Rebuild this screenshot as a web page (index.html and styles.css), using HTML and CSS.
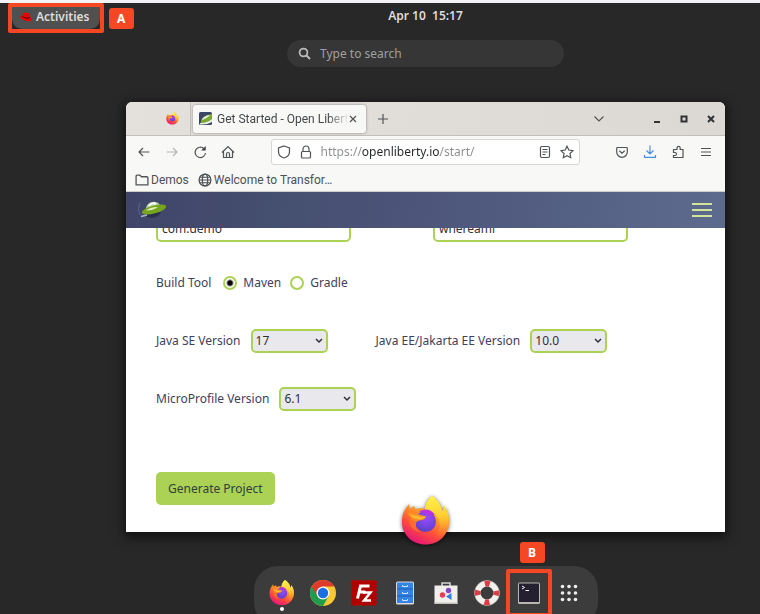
FILE: index.html
```html
<!DOCTYPE html>
<html lang="en">
<head>
<meta charset="utf-8">
<title>Activities overview</title>
<link rel="stylesheet" href="styles.css">
</head>
<body>
<svg class="defs" aria-hidden="true">
  <defs>
    <linearGradient id="ff-body" x1="0.75" y1="0.1" x2="0.3" y2="1">
      <stop offset="0" stop-color="#ffd83a"/><stop offset="0.35" stop-color="#ff9a26"/>
      <stop offset="0.65" stop-color="#ff4f3a"/><stop offset="1" stop-color="#e3127c"/>
    </linearGradient>
    <linearGradient id="ff-flame" x1="0.4" y1="0" x2="0.5" y2="1">
      <stop offset="0" stop-color="#fff04a"/><stop offset="0.5" stop-color="#ffd030"/><stop offset="1" stop-color="#ff8a30" stop-opacity="0"/>
    </linearGradient>
    <radialGradient id="ff-globe" cx="0.55" cy="0.3" r="0.8">
      <stop offset="0" stop-color="#9a4dff"/><stop offset="0.6" stop-color="#7044dc"/><stop offset="1" stop-color="#5040b8"/>
    </radialGradient>
    <symbol id="firefox" viewBox="0 0 50 50">
      <path fill="url(#ff-body)" d="M31 0C37 4 40 9 41 14L42 15 43 10C47 15 48.500 21 48 27 47 40 37 48.500 24.500 48.500 11 48.500 1 38.500 1 26 1 18 4 13 8 8L9 13 13 10 15 13.500C18 11.500 21 11.500 24 13 24 8 27 3 31 0Z"/>
      <path fill="url(#ff-flame)" d="M31 0C37 4 40 9 41 14L42 15 43 10C48 17 49 25 46 32 43 39 38 42 32 42 38 38 40 32 38 25 36 18 31 15 24 14 24 8 27 3 31 0Z"/>
      <circle cx="24.500" cy="25.500" r="10.500" fill="url(#ff-globe)"/>
      <path fill="#b833e1" d="M18 16C23 12 30 13 34 19L29 18C31 20 33 22 33.500 24 28 18 24 17 18 16Z"/>
      <path fill="#ff8a22" d="M6 17C10 14 15 16 18 18.500L25 20.500C24 23.500 21 24.500 18 24.500 15 25.500 14 27 15 31 11 30 9 26 10 22Z"/>
      <path fill="#ffb52c" d="M8 18C12 19 19 21 25 20.500 23 23 20 23.500 17 23.500 13 23 10 21 8 18Z"/>
      <path fill="#ff6b2d" d="M8 22C10 24 12 25 15.500 25.500 13 29 15 34 20 36 13 36 7 29 8 22Z"/>
    </symbol>
  </defs>
</svg>

<div class="desktop">
  <header class="panel">
    <div class="callout callout-activities">
      <button class="activities" type="button">
        <svg class="hat" viewBox="0 0 12 10" aria-hidden="true"><path fill="#e00" d="M3.500.8C4.500.3 5.500 1 6.500 1S8.500.5 9 1.500L9.800 5C11.200 5.500 12 6.500 11.800 7.500 11.500 9.500 8.500 9.500 6 8.800 3 8 .2 6.500.2 4.800.2 3.800 1.500 3.500 2.700 3.800Z"/><path fill="#300" d="M2.700 3.800C4 5.500 8 6.500 9.800 5L9.900 6C8 7.600 4 6.700 2.400 4.600Z"/></svg>
        Activities
      </button>
    </div>
    <span class="marker marker-a">A</span>
  </header>

  <main class="stage">
    <time class="clock">Apr 10 &nbsp;15:17</time>
    <label class="search">
      <svg viewBox="0 0 14 14" aria-hidden="true"><circle cx="5.500" cy="5.500" r="3.900" fill="none" stroke="#bbb" stroke-width="1.800"/><path d="M8.500 8.500 12 12" stroke="#bbb" stroke-width="2"/></svg>
      <input type="text" placeholder="Type to search" aria-label="Type to search">
    </label>

    <section class="window" aria-label="Firefox">
      <div class="tabbar">
        <button class="pinned" type="button" aria-label="Firefox View"><svg><use href="#firefox"/></svg></button>
        <div class="tab">
          <svg class="favicon" viewBox="0 0 13 13" aria-hidden="true"><rect width="13" height="13" rx="1.500" fill="#3c4668"/><path d="M2 8Q6 3 13 2V7Q8 11 2 11Z" fill="#7ba832"/><path d="M3 7Q6 3 11 3 9 6 3 8Z" fill="#dfe8cb"/><path d="M1 11Q8 11 13 7V10Q8 13 1 12.500Z" fill="#e9f0dc"/></svg>
          <span class="tab-title">Get Started - Open Liberty</span>
          <button class="plain" type="button" aria-label="Close tab"><svg class="s8" viewBox="0 0 8 8"><path d="M1 1 7 7M7 1 1 7"/></svg></button>
        </div>
        <button class="plain newtab" type="button" aria-label="New tab"><svg class="s10" viewBox="0 0 10 10"><path d="M5 0V10M0 5H10"/></svg></button>
        <div class="window-controls">
          <button class="plain list-tabs" type="button" aria-label="List all tabs"><svg class="s10" viewBox="0 0 10 10"><path d="M.5 2.500 5 7 9.500 2.500"/></svg></button>
          <button class="plain" type="button" aria-label="Minimize"><svg class="s8 heavy" viewBox="0 0 8 8"><path d="M1 7H7"/></svg></button>
          <button class="plain" type="button" aria-label="Maximize"><svg class="s8 heavy" viewBox="0 0 8 8"><path d="M1.500 1.500H6.500V6.500H1.500Z"/></svg></button>
          <button class="plain" type="button" aria-label="Close"><svg class="s8 heavy" viewBox="0 0 8 8"><path d="M1 1 7 7M7 1 1 7"/></svg></button>
        </div>
      </div>

      <div class="toolbar">
        <div class="tools">
          <button class="plain" type="button" aria-label="Back"><svg viewBox="0 0 14 14"><path d="M12.500 7H2M6 3 2 7 6 11"/></svg></button>
          <button class="plain" type="button" aria-label="Forward" disabled><svg viewBox="0 0 14 14"><path d="M1.500 7H12M8 3 12 7 8 11"/></svg></button>
          <button class="plain" type="button" aria-label="Reload"><svg viewBox="0 0 14 14"><path d="M11 3.700A5.200 5.200 0 1 0 12.500 8"/><path d="M12.700 1V5.500H8.200Z" fill="#3c3f40" stroke="none"/></svg></button>
          <button class="plain" type="button" aria-label="Home"><svg viewBox="0 0 14 14"><path d="M1 7.500 7 1.500 13 7.500M2.500 6.500V12.500H11.500V6.500M5.500 12.500V9A1.500 1.500 0 0 1 8.500 9V12.500"/></svg></button>
        </div>
        <div class="urlbar">
          <svg viewBox="0 0 14 14" aria-hidden="true"><path d="M7 1 12.500 3V6.500C12.500 10 10 12.300 7 13 4 12.300 1.500 10 1.500 6.500V3Z"/></svg>
          <svg viewBox="0 0 14 14" aria-hidden="true"><rect x="2.500" y="6.500" width="9" height="6.500" rx="1"/><path d="M4 6.500V4A3 3 0 0 1 10 4V6.500"/></svg>
          <input type="text" value="https://openliberty.io/start/" aria-label="Address">
          <button class="plain" type="button" aria-label="Reader view"><svg viewBox="0 0 14 14"><rect x="2.500" y="1.500" width="9" height="11" rx="1.500"/><path d="M4.500 4.500H9.500M4.500 7H9.500M4.500 9.500H7.500"/></svg></button>
          <button class="plain" type="button" aria-label="Bookmark this page"><svg viewBox="0 0 14 14"><path d="M7 1.200 8.800 5 13 5.600 10 8.500 10.700 12.700 7 10.700 3.300 12.700 4 8.500 1 5.600 5.200 5Z"/></svg></button>
        </div>
        <div class="tools">
          <button class="plain" type="button" aria-label="Pocket"><svg viewBox="0 0 14 14"><path d="M2.500 2.500H11.500A.8.8 0 0 1 12.300 3.300V7A5.300 5.300 0 0 1 1.700 7V3.300A.8.8 0 0 1 2.500 2.500ZM4.300 5.700 7 8.200 9.700 5.700"/></svg></button>
          <button class="plain download" type="button" aria-label="Downloads"><svg viewBox="0 0 14 14"><path d="M7 .5V8.500M3.500 5.500 7 9 10.500 5.500M1.500 10V12.300H12.500V10"/></svg></button>
          <button class="plain" type="button" aria-label="Extensions"><svg viewBox="0 0 14 14"><path d="M2.500 4.500H6V3A1.600 1.600 0 0 1 9.200 3V4.500H12V12.500H2.500V10.500H4A1.500 1.500 0 0 0 4 7.500H2.500Z"/></svg></button>
          <button class="plain" type="button" aria-label="Application menu"><svg viewBox="0 0 14 14"><path d="M2 3.500H12M2 7H12M2 10.500H12"/></svg></button>
        </div>
      </div>

      <nav class="bookmarks">
        <a href="#"><svg viewBox="0 0 13 13" aria-hidden="true"><path d="M1 11V3A1 1 0 0 1 2 2H4.500L6 3.500H11A1 1 0 0 1 12 4.500V11Z"/></svg>Demos</a>
        <a href="#"><svg viewBox="0 0 13 13" aria-hidden="true"><circle cx="6.500" cy="6.500" r="5.500"/><ellipse cx="6.500" cy="6.500" rx="2.500" ry="5.500"/><path d="M1 6.500H12M2 4H11M2 9H11" stroke-width="1"/></svg>Welcome to Transfor…</a>
      </nav>

      <div class="site-header">
        <svg class="ufo" viewBox="0 0 30 20" aria-label="Open Liberty">
          <path d="M3 3Q0 9 3 15" fill="none" stroke="#56698e"/>
          <ellipse cx="16" cy="13" rx="8" ry="4.500" fill="#2a304c" transform="rotate(-12 16 13)"/>
          <path d="M9 9C9 2 19 -1 23 5L22 9 10 12Z" fill="#b7d3a2"/>
          <path d="M12 6Q15 2 19 4" stroke="#fff" stroke-width="2" fill="none"/>
          <ellipse cx="17" cy="9.500" rx="12.500" ry="4" transform="rotate(-15 17 9.500)" fill="#75a51f"/>
          <path d="M9 10.500Q16 10.500 21 7 14 6.500 9 10.500Z" fill="#e3eebb"/>
          <path d="M4 16.500 10 15" stroke="#aab4ca" stroke-width="1.500"/>
        </svg>
        <button class="plain" type="button" aria-label="Menu"><svg class="burger" viewBox="0 0 20 16"><path d="M0 2H20M0 8H20M0 14H20"/></svg></button>
      </div>

      <form class="page">
        <div class="row row-names">
          <input type="text" value="com.demo" aria-label="Group">
          <input type="text" value="whereami" aria-label="Artifact">
        </div>
        <div class="row row-build">
          <span class="build-label">Build Tool</span>
          <label class="radio"><input type="radio" name="build" checked>Maven</label>
          <label class="radio"><input type="radio" name="build">Gradle</label>
        </div>
        <div class="row row-java">
          <div class="field"><label for="se">Java SE Version</label>
            <span class="select"><select id="se"><option>17</option></select><svg viewBox="0 0 8 6" aria-hidden="true"><path d="M1 1 4 4 7 1"/></svg></span></div>
          <div class="field"><label for="ee">Java EE/Jakarta EE Version</label>
            <span class="select"><select id="ee"><option>10.0</option></select><svg viewBox="0 0 8 6" aria-hidden="true"><path d="M1 1 4 4 7 1"/></svg></span></div>
        </div>
        <div class="row row-mp">
          <div class="field"><label for="mp">MicroProfile Version</label>
            <span class="select"><select id="mp"><option>6.1</option></select><svg viewBox="0 0 8 6" aria-hidden="true"><path d="M1 1 4 4 7 1"/></svg></span></div>
        </div>
        <button class="generate" type="button">Generate Project</button>
      </form>
      <svg class="window-icon" aria-hidden="true"><use href="#firefox"/></svg>
    </section>

    <nav class="dock" aria-label="Dash">
      <button type="button" class="running" aria-label="Firefox"><svg><use href="#firefox"/></svg></button>
      <button type="button" aria-label="Chrome"><svg viewBox="0 0 26 26"><circle cx="13" cy="13" r="13" fill="#fcc934"/><path d="M13 13 1.740 6.500A13 13 0 0 0 13 26L18.600 16.300Z" fill="#1f9d4d"/><path d="M13 6.500H24.260A13 13 0 0 0 1.740 6.500L7.400 16.200 13 13Z" fill="#de3b2f"/><circle cx="13" cy="13" r="6.500" fill="#fff"/><circle cx="13" cy="13" r="5.200" fill="#1b6fe4"/></svg></button>
      <button type="button" aria-label="FileZilla"><svg viewBox="0 0 26 26"><rect x="1" y="1" width="24" height="24" fill="#b00000" stroke="#b00000" stroke-width="2" stroke-dasharray="2.500 1.500"/><path d="M6.500 18.500 9.500 6H18.500M8 12H14.500" fill="none" stroke="#fff" stroke-width="3"/><path d="M12 12.500H19.500L13 20.500H20" fill="none" stroke="#fff" stroke-width="2.500"/></svg></button>
      <button type="button" aria-label="Files"><svg viewBox="0 0 26 26"><rect x="4" y="1.500" width="18" height="23" rx="1.500" fill="#dcdad6"/><rect x="5" y="2.500" width="16" height="20.500" fill="#3584e4"/><path d="M5 9H21M5 16H21" stroke="#1c5fb5"/><path d="M10.500 5V6.500H15.500V5M10.500 12V13.500H15.500V12M10.500 19V20.500H15.500V19" fill="none" stroke="#d5e5f8"/></svg></button>
      <button type="button" aria-label="Software"><svg viewBox="0 0 26 26"><path d="M9 6V3H17V6" fill="none" stroke="#d8d5cf" stroke-width="1.500"/><path d="M1.500 5.500H24.500V24H1.500Z" fill="#f1efeb"/><path d="M1.500 22.500H24.500V24H1.500Z" fill="#c5c2bc"/><circle cx="15.500" cy="10.500" r="2.700" fill="#8544c8"/><circle cx="9.500" cy="15" r="2.700" fill="#ec3b58"/><path d="M18.500 13V20L13 16.500Z" fill="#2d7ee8"/></svg></button>
      <button type="button" aria-label="Help"><svg viewBox="0 0 26 26"><circle cx="13" cy="13" r="9.500" fill="none" stroke="#f3f1ee" stroke-width="6"/><circle cx="13" cy="13" r="9.500" fill="none" stroke="#df3b43" stroke-width="6" stroke-dasharray="5 9.923" stroke-dashoffset="2.500"/><circle cx="13" cy="13" r="12.500" fill="none" stroke="#aaa49c" stroke-width=".6"/></svg></button>
      <div class="callout callout-terminal">
        <span class="marker marker-b">B</span>
        <button type="button" aria-label="Terminal"><svg viewBox="0 0 26 26"><rect x="2" y="2.500" width="22" height="21.500" rx="1.500" fill="#b9b6b1"/><rect x="3" y="3.500" width="20" height="18.500" fill="#241f31"/><path d="M6 6 8.500 7.500 6 9M9.500 10.500H13" fill="none" stroke="#fff"/></svg></button>
      </div>
      <button type="button" aria-label="Show applications"><svg viewBox="0 0 26 26" fill="#eee"><circle cx="6.500" cy="6.500" r="1.800"/><circle cx="13" cy="6.500" r="1.800"/><circle cx="19.500" cy="6.500" r="1.800"/><circle cx="6.500" cy="13" r="1.800"/><circle cx="13" cy="13" r="1.800"/><circle cx="19.500" cy="13" r="1.800"/><circle cx="6.500" cy="19.500" r="1.800"/><circle cx="13" cy="19.500" r="1.800"/><circle cx="19.500" cy="19.500" r="1.800"/></svg></button>
    </nav>
  </main>
</div>
</body>
</html>
```
FILE: styles.css
```css
* { box-sizing: border-box; }

html, body { height: 100%; }

body {
  margin: 0;
  overflow: hidden;
  background: #282828;
  font-family: "Noto Sans", "Open Sans", sans-serif;
  font-size: 12px;
  line-height: 16px;
}

button, input, select { font: inherit; }

svg { display: block; flex: none; }

.defs { position: absolute; width: 0; height: 0; }

.desktop {
  min-height: 100%;
  border-top: 3px solid #f2f3f6;
}

.panel {
  position: absolute;
  top: 3px;
  left: 8px;
  display: flex;
  align-items: flex-start;
  gap: 5px;
}

.callout { border: 4px solid #f64724; border-radius: 2px; }

.activities {
  display: flex;
  align-items: center;
  gap: 4px;
  height: 22px;
  padding: 0 10px 2px 8px;
  border: 0;
  border-radius: 0 0 10px 10px;
  background: #505050;
  color: #ddd;
  font-weight: 600;
}

.hat { width: 12px; height: 10px; }

.marker {
  display: grid;
  place-items: center;
  width: 25px;
  height: 21px;
  border-radius: 3px;
  background: #f64724;
  color: #fff;
  font-weight: 700;
}

.marker-a { margin-top: 5px; }

.stage {
  display: flex;
  flex-direction: column;
  align-items: center;
  padding: 5px 0 0 91px;
}

.clock { color: #ddd; font-weight: 600; }

.search {
  display: flex;
  align-items: center;
  gap: 8px;
  width: 277px;
  height: 27px;
  margin-top: 16px;
  padding: 0 11px;
  border-radius: 14px;
  background: #363636;
}

.search svg { width: 14px; height: 14px; }

.search input {
  flex: 1;
  min-width: 0;
  padding: 0;
  border: 0;
  outline: 0;
  background: none;
  color: #ddd;
}

.search input::placeholder { color: #a0a0a0; opacity: 1; }

.window {
  position: relative;
  align-self: stretch;
  margin: 35px 35px 0;
  border-radius: 6px 6px 0 0;
  background: #fff;
  box-shadow: 0 3px 12px 2px #0009;
}

.plain {
  display: grid;
  place-items: center;
  padding: 0;
  border: 0;
  background: none;
}

.plain svg, .urlbar svg, .bookmarks svg {
  width: 14px;
  height: 14px;
  fill: none;
  stroke: #505456;
  stroke-width: 1.2;
}

.plain .s8 { width: 8px; height: 8px; }
.plain .s10 { width: 10px; height: 10px; }
.plain .heavy { stroke: #303435; stroke-width: 2; }

.tabbar {
  display: flex;
  align-items: center;
  height: 34px;
  border-bottom: 1px solid #c2beb9;
  border-radius: 6px 6px 0 0;
  background: linear-gradient(100deg, #e4e0dc, #dcd9d5);
}

.pinned {
  width: 65px;
  height: 33px;
  padding: 0 0 0 40px;
  border: 0;
  border-right: 1px solid #c6c2bd;
  background: none;
}

.pinned svg { width: 13px; height: 13px; }

.tab {
  display: flex;
  align-items: center;
  width: 173px;
  height: 28px;
  margin-left: 2px;
  padding: 0 9px 0 6px;
  border-radius: 3px;
  background: #f8f8f7;
  box-shadow: 0 0 3px #0006;
  color: #44484a;
}

.favicon { width: 13px; height: 13px; margin-right: 5px; }

.tab-title {
  flex: 1;
  min-width: 0;
  overflow: hidden;
  font-family: Roboto, "Noto Sans", sans-serif;
  white-space: nowrap;
  mask-image: linear-gradient(90deg, #000 84%, transparent);
}

.newtab { margin-left: 12px; }

.window-controls {
  display: flex;
  align-items: center;
  gap: 19px;
  margin-left: auto;
  padding-right: 10px;
}

.list-tabs { margin-right: 30px; }

.toolbar {
  display: flex;
  align-items: center;
  justify-content: space-between;
  height: 32px;
  padding: 0 12px 0 11px;
  background: #f8f8f7;
}

.tools { display: flex; gap: 14px; }

.plain:disabled { opacity: 0.4; }
.plain.download svg { stroke: #4a90e2; }

.urlbar {
  display: flex;
  align-items: center;
  gap: 8px;
  width: 309px;
  height: 26px;
  padding: 0 5px;
  border: 1px solid #d9d7d4;
  border-radius: 3px;
  background: #fff;
}

.urlbar input {
  flex: 1;
  min-width: 0;
  padding: 0;
  border: 0;
  outline: 0;
  background: linear-gradient(90deg, #8a8d8f 41px, #242729 41px 119px, #8a8d8f 119px);
  background-clip: text;
  color: transparent;
}

.bookmarks {
  display: flex;
  align-items: center;
  gap: 9px;
  height: 24px;
  padding: 0 9px;
  border-bottom: 1px solid #cfcdca;
  background: #f8f8f7;
  font-family: Roboto, "Noto Sans", sans-serif;
}

.bookmarks a {
  display: flex;
  align-items: center;
  gap: 2px;
  color: #4c5052;
  text-decoration: none;
}

.site-header {
  display: flex;
  align-items: center;
  justify-content: space-between;
  height: 36px;
  padding: 0 13px 0 11px;
  background: linear-gradient(100deg, #40446a, #454f6f 25%, #4d557b 50%, #5d6b8e);
}

.ufo { width: 30px; height: 20px; }

.plain .burger { width: 20px; height: 16px; stroke: #d2e39a; stroke-width: 2; }

.page {
  overflow: hidden;
  padding: 0 30px 27px;
  color: #40405c;
}

.row { display: flex; align-items: center; }

.row-names { gap: 82px; margin-top: -12px; }

.row-names input {
  width: 195px;
  height: 26px;
  min-width: 0;
  padding: 0 4px 2px;
  border: 2px solid #abd155;
  border-radius: 5px;
  background: #fff;
  color: #303038;
}

.row-build { gap: 9px; margin-top: 33px; }
.build-label { margin-right: 3px; }
.radio { display: flex; align-items: center; gap: 6px; }

.radio input {
  appearance: none;
  width: 14px;
  height: 14px;
  margin: 0;
  border: 2px solid #abd155;
  border-radius: 50%;
  background: #fff;
}

.radio input:checked { background: radial-gradient(circle, #000 2px, #fff 4px); }

.row-java { gap: 48px; margin-top: 38px; }
.row-mp { margin-top: 34px; }

.field { display: flex; align-items: center; gap: 10px; white-space: nowrap; }

.select { display: grid; align-items: center; }
.select select, .select svg { grid-area: 1 / 1; }

.select select {
  appearance: none;
  width: 77px;
  height: 24px;
  padding: 0 3px;
  border: 2px solid #abd155;
  border-radius: 5px;
  background: #e9e9ed;
  color: #303038;
}

.select svg {
  justify-self: end;
  width: 8px;
  height: 6px;
  margin-right: 5px;
  fill: none;
  stroke: #303038;
  stroke-width: 1.5;
  pointer-events: none;
}

.generate {
  height: 33px;
  margin-top: 61px;
  padding: 0 12px;
  border: 0;
  border-radius: 5px;
  background: #abd155;
  color: #32403f;
}

.window-icon {
  position: absolute;
  bottom: -14px;
  left: calc(50% - 25px);
  width: 50px;
  height: 50px;
  filter: drop-shadow(0 1px 2px #0009);
}

.dock {
  display: flex;
  align-items: flex-start;
  height: 60px;
  margin-top: 34px;
  padding: 0 8px;
  border-radius: 24px;
  background: #3c3c3c;
}

.dock button {
  display: grid;
  place-items: center;
  width: 41px;
  height: 54px;
  padding: 0;
  border: 0;
  background: none;
}

.dock svg { width: 26px; height: 26px; }

.running { position: relative; }

.running::after {
  content: "";
  position: absolute;
  bottom: 9px;
  left: 50%;
  width: 4px;
  height: 4px;
  margin-left: -2px;
  border-radius: 50%;
  background: #fff;
}

.callout-terminal { position: relative; margin: 3px -3px 0 -2px; }
.callout-terminal button { width: 38px; height: 40px; }

.marker-b { position: absolute; top: -31px; left: 10px; }
```
